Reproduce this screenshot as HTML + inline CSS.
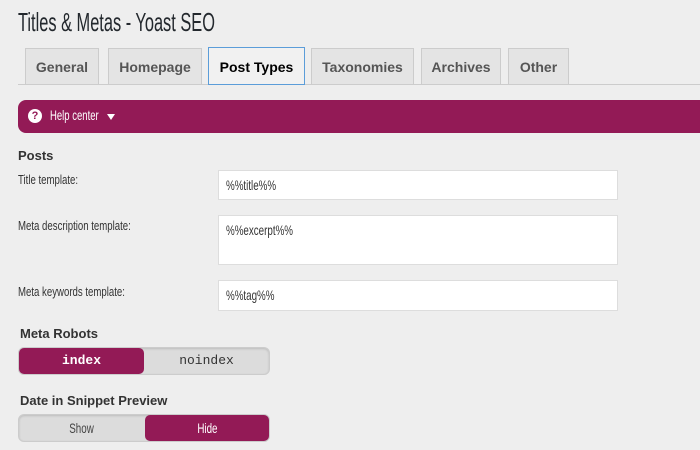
<!DOCTYPE html>
<html><head><style>
body{margin:0;width:700px;height:450px;background:#eeeeee;font-family:"Liberation Sans",sans-serif;position:relative;overflow:hidden;color:#222}
.a{position:absolute}
h1{position:absolute;left:18px;top:7px;margin:0;font-weight:normal;font-size:26px;color:#23282d;white-space:nowrap;transform:scaleX(0.63);transform-origin:0 0}
.tab{position:absolute;top:48px;height:36px;background:#e4e4e4;border:1px solid #ccc;border-bottom:none;box-sizing:border-box;font-weight:bold;font-size:14px;color:#555;text-align:center;line-height:36px}
.in{position:absolute;left:218px;width:400px;background:#fff;border:1px solid #ddd;box-sizing:border-box;font-size:14px;color:#333;padding-left:7px;white-space:nowrap}
.in span{display:inline-block;transform:scaleX(0.7);transform-origin:0 50%}
.lab{position:absolute;left:18px;font-size:13px;color:#333;white-space:nowrap;transform:scaleX(0.74);transform-origin:0 0}
.b{position:absolute;left:20px;font-weight:bold;font-size:13px;color:#333}
.tg{position:absolute;left:18px;width:252px;height:28px;background:#dcdcdc;border:1px solid #ccc;border-radius:6px;box-sizing:border-box;box-shadow:inset 0 1px 2px rgba(0,0,0,.15)}
.tg div{position:absolute;top:0;height:26px;line-height:26px;text-align:center;font-size:14px;border-radius:5px}
.tg div span{display:inline-block;transform:scaleX(0.7)}
.on{background:#931a56;color:#fff}
</style></head><body>
<h1>Titles &amp; Metas - Yoast SEO</h1>
<div class="a" style="left:18px;top:84px;width:682px;height:1px;background:#ccc"></div>
<div class="tab" style="left:25px;width:74px">General</div>
<div class="tab" style="left:108px;width:94px">Homepage</div>
<div class="tab" style="left:208px;width:97px;top:47px;height:38px;background:#f1f1f1;border:1px solid #5b9dd9;color:#000;line-height:38px">Post Types</div>
<div class="tab" style="left:311px;width:103px">Taxonomies</div>
<div class="tab" style="left:421px;width:80px">Archives</div>
<div class="tab" style="left:508px;width:61px">Other</div>
<div class="a" style="left:18px;top:100px;width:700px;height:33px;background:#931a56;border-radius:8px 0 0 8px"></div>
<div class="a" style="left:28px;top:109px;width:14px;height:14px;border-radius:50%;background:#fff;color:#931a56;font-size:11px;font-weight:bold;text-align:center;line-height:14px">?</div>
<div class="a" style="left:50px;top:107px;color:#fff;font-size:14px;white-space:nowrap;transform:scaleX(0.68);transform-origin:0 0">Help center</div>
<div class="a" style="left:107px;top:114px;width:0;height:0;border-left:4px solid transparent;border-right:4px solid transparent;border-top:6px solid #fff"></div>
<div class="b" style="left:18px;top:148px">Posts</div>
<div class="lab" style="top:172px">Title template:</div>
<div class="in" style="top:170px;height:30px;line-height:28px"><span>%%title%%</span></div>
<div class="lab" style="top:218px">Meta description template:</div>
<div class="in" style="top:215px;height:50px;padding-top:6px"><span>%%excerpt%%</span></div>
<div class="lab" style="top:284px">Meta keywords template:</div>
<div class="in" style="top:280px;height:31px;line-height:29px"><span>%%tag%%</span></div>
<div class="b" style="top:326px">Meta Robots</div>
<div class="tg" style="top:347px"><div class="on" style="left:0;width:125px;font-family:'Liberation Mono',monospace;font-weight:bold;font-size:13px">index</div><div style="left:125px;width:125px;font-family:'Liberation Mono',monospace;color:#333;font-size:13px">noindex</div></div>
<div class="b" style="top:393px">Date in Snippet Preview</div>
<div class="tg" style="top:414px"><div style="left:0;width:125px;color:#444"><span>Show</span></div><div class="on" style="left:126px;width:124px"><span>Hide</span></div></div>
</body></html>
